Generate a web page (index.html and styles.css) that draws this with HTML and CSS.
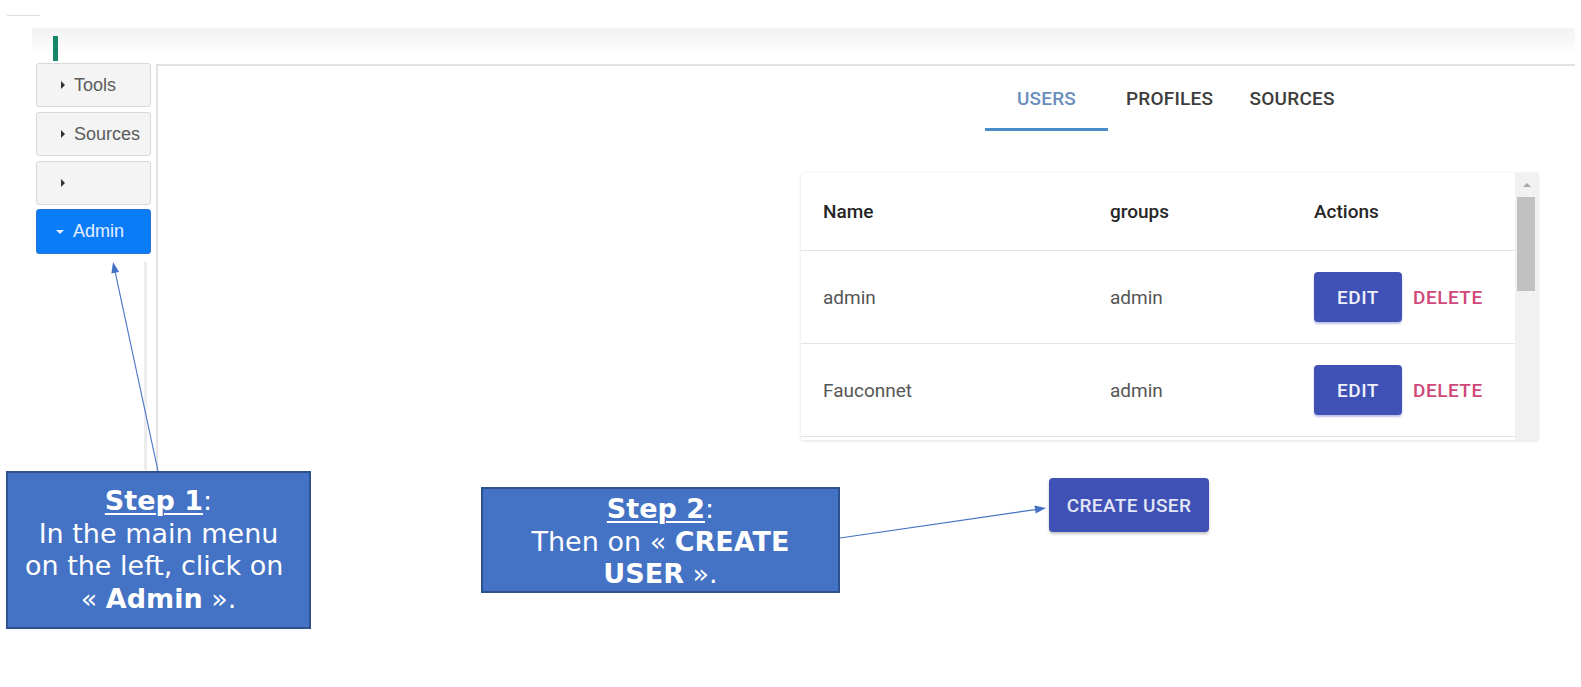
FILE: index.html
```html
<!DOCTYPE html>
<html lang="en">
<head>
<meta charset="utf-8">
<title>Admin - Users</title>
<link rel="stylesheet" href="styles.css">
</head>
<body>
<div class="page">
  <div class="topline"></div>
  <header class="appbar"><div class="brand-bar"></div></header>
  <div class="workspace">
    <nav class="sidebar">
      <div class="nav-btn"><span class="caret-right"></span>Tools</div>
      <div class="nav-btn"><span class="caret-right"></span>Sources</div>
      <div class="nav-btn"><span class="caret-right"></span></div>
      <div class="nav-btn active"><span class="caret-down"></span>Admin</div>
      <div class="nav-rail"></div>
    </nav>
    <section class="panel">
      <div class="tabs">
        <div class="tab selected">USERS</div>
        <div class="tab">PROFILES</div>
        <div class="tab">SOURCES</div>
      </div>
      <div class="card">
        <div class="table">
          <div class="row head">
            <div class="cell">Name</div>
            <div class="cell">groups</div>
            <div class="cell">Actions</div>
          </div>
          <div class="row">
            <div class="cell">admin</div>
            <div class="cell">admin</div>
            <div class="cell actions"><span class="btn-edit">EDIT</span><span class="btn-delete">DELETE</span></div>
          </div>
          <div class="row">
            <div class="cell">Fauconnet</div>
            <div class="cell">admin</div>
            <div class="cell actions"><span class="btn-edit">EDIT</span><span class="btn-delete">DELETE</span></div>
          </div>
        </div>
        <div class="scrollbar"><span class="scroll-up"></span><span class="thumb"></span></div>
      </div>
      <div class="create-btn">CREATE USER</div>
    </section>
  </div>

  <div class="callout step1">
    <span class="step">Step 1</span>:<br>
    In the main menu<br>
    on the left, click on&nbsp;<br>
    « <b>Admin</b> ».
  </div>
  <div class="callout step2">
    <span class="step">Step 2</span>:<br>
    Then on « <b>CREATE</b><br>
    <b>USER</b> ».
  </div>

  <svg class="arrows" width="1581" height="687" viewBox="0 0 1581 687">
    <line x1="158" y1="471" x2="115.3" y2="272.7" stroke="#4472c4" stroke-width="1.1"/>
    <polygon points="113,262 119.2,271.9 111.4,273.6" fill="#4472c4"/>
    <line x1="840" y1="538" x2="1035.1" y2="509.6" stroke="#4472c4" stroke-width="1.1"/>
    <polygon points="1046,508 1035.7,513.6 1034.5,505.6" fill="#4472c4"/>
  </svg>
</div>
</body>
</html>
```

FILE: styles.css
```css
* { box-sizing: border-box; }

html, body {
  margin: 0;
  padding: 0;
  background: #ffffff;
}

.page {
  position: relative;
  width: 1581px;
  height: 687px;
  overflow: hidden;
  font-family: Roboto, "Liberation Sans", Arial, sans-serif;
}

.topline {
  margin: 15px 0 0 7px;
  width: 33px;
  height: 1px;
  background: #dddddd;
}

.appbar {
  margin: 12px 0 0 32px;
  width: 1543px;
  height: 35px;
  padding: 8px 0 0 21px;
  background: linear-gradient(#f3f3f3 0px, #f7f7f7 12px, #ffffff 28px);
}

.brand-bar {
  width: 5px;
  height: 25px;
  background: #16866a;
}

.workspace {
  display: flex;
  align-items: flex-start;
  margin-left: 36px;
}

.sidebar {
  width: 115px;
  display: flex;
  flex-direction: column;
  gap: 5px;
  font-family: "Liberation Sans", Arial, sans-serif;
}

.nav-btn {
  height: 44px;
  display: flex;
  align-items: center;
  padding-left: 24px;
  background: #f4f4f4;
  border: 1px solid #d9d9d9;
  border-radius: 3px;
  font-size: 18px;
  color: #5a5a5a;
}

.caret-right {
  width: 0;
  height: 0;
  border-top: 4px solid transparent;
  border-bottom: 4px solid transparent;
  border-left: 4px solid #333333;
  margin-right: 9px;
}

.nav-btn.active {
  background: #0b7cf8;
  border-color: #2b74d6;
  color: #e4efff;
  padding-left: 19px;
  margin-top: -1px;
  height: 45px;
}

.caret-down {
  width: 0;
  height: 0;
  border-left: 4px solid transparent;
  border-right: 4px solid transparent;
  border-top: 4px solid #e4efff;
  margin-right: 9px;
}

.nav-rail {
  margin: 3px 0 0 108px;
  width: 3px;
  height: 208px;
  background: #ececec;
}

.panel {
  margin: 1px 0 0 5px;
  width: 1419px;
  border-top: 2px solid #e2e2e2;
  border-left: 2px solid #e2e2e2;
}

.tabs {
  display: flex;
  padding-left: 827px;
  height: 65px;
}

.tab {
  min-width: 122px;
  padding: 0 18px;
  height: 65px;
  display: flex;
  align-items: center;
  justify-content: center;
  font-size: 19px;
  font-weight: 500;
  color: #3c3c3c;
  letter-spacing: 0.2px;
}

.tab.selected {
  width: 123px;
  color: #6b8dbb;
  border-bottom: 3px solid #4a8cca;
  padding-top: 3px;
}

.card {
  margin: 42px 0 0 643px;
  width: 737px;
  height: 267px;
  display: flex;
  background: #ffffff;
  box-shadow: 0 1px 3px rgba(0, 0, 0, 0.10), 0 0 2px rgba(0, 0, 0, 0.06);
  overflow: hidden;
}

.table {
  width: 714px;
}

.row {
  display: grid;
  grid-template-columns: 287px 204px 223px;
  align-items: center;
  height: 93px;
  border-bottom: 1px solid #e4e4e4;
  font-size: 19px;
  color: #555555;
}

.row.head {
  height: 78px;
  font-weight: 500;
  color: #262626;
}

.cell {
  padding-left: 22px;
}

.actions {
  display: flex;
  align-items: center;
}

.btn-edit {
  width: 88px;
  height: 50px;
  display: flex;
  align-items: center;
  justify-content: center;
  background: #3f51b5;
  color: #eef0fb;
  border-radius: 4px;
  font-weight: 500;
  letter-spacing: 0.5px;
  box-shadow: 0 2px 2px rgba(63, 81, 181, 0.35);
}

.btn-delete {
  margin-left: 11px;
  color: #cf4879;
  font-weight: 500;
  letter-spacing: 0.5px;
}

.scrollbar {
  width: 23px;
  background: #f1f1f1;
  display: flex;
  flex-direction: column;
  align-items: flex-start;
  padding-left: 2px;
}

.scroll-up {
  margin: 10px 0 0 6px;
  width: 0;
  height: 0;
  border-left: 4px solid transparent;
  border-right: 4px solid transparent;
  border-bottom: 4px solid #a6a6a6;
}

.thumb {
  margin-top: 10px;
  width: 18px;
  height: 94px;
  background: #c1c1c1;
}

.create-btn {
  margin: 38px 0 0 891px;
  width: 160px;
  height: 54px;
  display: flex;
  align-items: center;
  justify-content: center;
  background: #3f51b5;
  color: #e3e6f6;
  border-radius: 4px;
  font-size: 19px;
  font-weight: 500;
  letter-spacing: 0.4px;
  box-shadow: 0 2px 3px rgba(0, 0, 0, 0.25);
}

.callout {
  position: absolute;
  background: #4472c4;
  border: 2px solid #2f528f;
  color: #ffffff;
  font-family: "DejaVu Sans", sans-serif;
  font-size: 27px;
  line-height: 32.5px;
  text-align: center;
  white-space: nowrap;
}

.callout b {
  font-weight: 700;
}

.step {
  font-weight: 700;
  text-decoration: underline;
  text-decoration-thickness: 2px;
  text-underline-offset: 3px;
}

.step1 {
  left: 6px;
  top: 471px;
  width: 305px;
  height: 158px;
  padding-top: 12px;
}

.step2 {
  left: 481px;
  top: 487px;
  width: 359px;
  height: 106px;
  padding-top: 4px;
}

.arrows {
  position: absolute;
  left: 0;
  top: 0;
  pointer-events: none;
}
```
